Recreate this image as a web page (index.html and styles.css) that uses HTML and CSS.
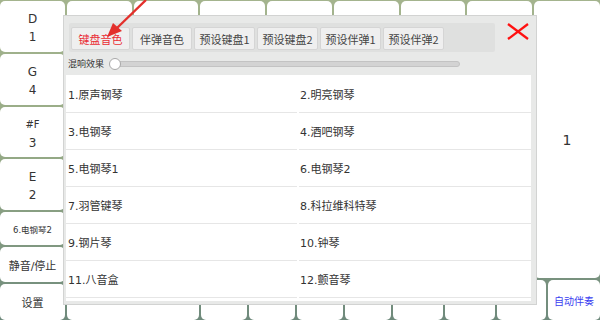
FILE: index.html
```html
<!DOCTYPE html>
<html>
<head>
<meta charset="utf-8">
<link rel="stylesheet" href="styles.css">
</head>
<body>
<div class="board">
  <div class="left-col">
    <div class="key key-note h52"><span>D</span><span>1</span></div>
    <div class="key key-note h51"><span>G</span><span>4</span></div>
    <div class="key key-note h50"><span class="sharp">#F</span><span>3</span></div>
    <div class="key key-note h51"><span>E</span><span>2</span></div>
    <div class="key key-small h33">6.电钢琴2</div>
    <div class="key key-cmd h35">静音/停止</div>
    <div class="key key-cmd h36">设置</div>
  </div>
  <div class="main">
    <div class="upper">
      <div class="center">
        <div class="top-row">
          <div class="key"></div><div class="key"></div><div class="key"></div><div class="key"></div><div class="key"></div><div class="key"></div><div class="key"></div>
        </div>
        <div class="key filler"></div>
      </div>
      <div class="key tall">1</div>
    </div>
    <div class="bottom-row">
      <div class="key w132"></div>
      <div class="key w46"></div>
      <div class="key w46"></div>
      <div class="key w46"></div>
      <div class="key w46"></div>
      <div class="key w50"></div>
      <div class="key w50"></div>
      <div class="key w49"></div>
      <div class="key w52 auto">自动伴奏</div>
    </div>
  </div>

  <div class="dialog">
    <div class="tabs-row">
      <div class="tabs">
        <div class="tab active t59">键盘音色</div>
        <div class="tab t60">伴弹音色</div>
        <div class="tab t61">预设键盘1</div>
        <div class="tab t61">预设键盘2</div>
        <div class="tab t61">预设伴弹1</div>
        <div class="tab t61">预设伴弹2</div>
      </div>
      <svg class="close" width="22" height="17" viewBox="0 0 22 17">
        <line x1="1" y1="1" x2="21" y2="16" stroke="#ff1010" stroke-width="2.2"/>
        <line x1="21" y1="1" x2="1" y2="16" stroke="#ff1010" stroke-width="2.2"/>
      </svg>
    </div>
    <div class="reverb">
      <span class="reverb-label">混响效果</span>
      <div class="slider">
        <div class="track"></div>
        <div class="knob"></div>
      </div>
    </div>
    <div class="list">
      <div class="item">1.原声钢琴</div>
      <div class="item right">2.明亮钢琴</div>
      <div class="item">3.电钢琴</div>
      <div class="item right">4.酒吧钢琴</div>
      <div class="item">5.电钢琴1</div>
      <div class="item right">6.电钢琴2</div>
      <div class="item">7.羽管键琴</div>
      <div class="item right">8.科拉维科特琴</div>
      <div class="item">9.钢片琴</div>
      <div class="item right">10.钟琴</div>
      <div class="item">11.八音盒</div>
      <div class="item right">12.颤音琴</div>
    </div>
  </div>

  <svg class="arrow" width="70" height="50" viewBox="0 0 70 50">
    <line x1="66" y1="0" x2="37" y2="28" stroke="#e3302c" stroke-width="2.4"/>
    <polygon points="27,37 33,23 42,31" fill="#e3302c"/>
  </svg>
</div>
</body>
</html>
```

FILE: styles.css
```css
* { box-sizing: border-box; }
html, body { margin: 0; padding: 0; }
body {
  width: 600px;
  height: 320px;
  overflow: hidden;
  font-family: "DejaVu Sans", "Noto Sans CJK SC", sans-serif;
  color: #333;
}
.board {
  position: relative;
  width: 600px;
  height: 320px;
  display: flex;
  gap: 2px;
  padding-top: 1px;
  background: linear-gradient(180deg, #a4b48e 0%, #97ab86 45%, #6f8a7c 100%);
}
.key {
  background: #fff;
  border-radius: 5px;
}
.left-col {
  width: 65px;
  display: flex;
  flex-direction: column;
  gap: 2px;
}
.h52 { height: 51px; }
.h51 { height: 51px; }
.h50 { height: 50px; }
.h33 { height: 33px; }
.h35 { height: 35px; }
.h36 { height: 36px; }
.key-note {
  display: flex;
  flex-direction: column;
  align-items: center;
  justify-content: center;
  gap: 4px;
  padding-top: 3px;
  font-size: 12px;
  line-height: 14px;
  color: #333;
}
.key-note .sharp { font-size: 10px; }
.key-small {
  display: flex;
  align-items: center;
  justify-content: center;
  font-size: 8.5px;
  color: #333;
}
.key-cmd {
  display: flex;
  align-items: center;
  justify-content: center;
  font-size: 11px;
  color: #333;
}
.main {
  flex: 1;
  display: flex;
  flex-direction: column;
  gap: 2px;
}
.upper {
  height: 277px;
  display: flex;
  gap: 2px;
}
.center {
  flex: 1;
  display: flex;
  flex-direction: column;
  gap: 2px;
}
.top-row {
  height: 60px;
  display: flex;
  gap: 2px;
}
.top-row .key { flex: 1; }
.filler { flex: 1; }
.tall {
  width: 66px;
  display: flex;
  align-items: center;
  justify-content: center;
  font-size: 14px;
  color: #333;
}
.bottom-row {
  flex: 1;
  display: flex;
  gap: 2px;
}
.w132 { width: 132px; }
.w46 { width: 46px; }
.w50 { width: 50px; }
.w49 { width: 49px; }
.w52 { width: 52px; }
.auto {
  display: flex;
  align-items: center;
  justify-content: center;
  font-size: 10px;
  color: #3a3ef0;
}

/* dialog */
.dialog {
  position: absolute;
  left: 63px;
  top: 15px;
  width: 474px;
  height: 290px;
  background: #e8e9e8;
  border: 1px solid #d2d3d2;
  padding: 7px 6px 4px 1px;
  display: flex;
  flex-direction: column;
}
.tabs-row {
  display: flex;
  align-items: flex-start;
}
.tabs {
  margin-left: 4px;
  width: 426px;
  height: 29px;
  background: #dfe0df;
  border-radius: 2px;
  padding: 4px 2px 2px 2px;
  display: flex;
  gap: 2px;
}
.tab {
  height: 23px;
  background: #efefef;
  border: 1px solid #d5d5d5;
  border-radius: 2px;
  display: flex;
  align-items: center;
  justify-content: center;
  font-size: 11px;
  color: #444;
  font-family: "Noto Sans CJK SC", sans-serif;
}
.tab.active { color: #ea2d35; }
.t59 { width: 59px; }
.t60 { width: 60px; }
.t61 { width: 61px; }
.close {
  margin-left: 12px;
  margin-top: 0px;
}
.reverb {
  margin-top: 5px;
  margin-left: 3px;
  height: 14px;
  display: flex;
  align-items: center;
}
.reverb-label {
  font-size: 9px;
  color: #333;
  font-family: "Noto Sans CJK SC", sans-serif;
}
.slider {
  position: relative;
  margin-left: 5px;
  width: 351px;
  height: 12px;
  display: flex;
  align-items: center;
}
.track {
  margin-left: 5px;
  flex: 1;
  height: 6px;
  background: #d3d3d3;
  border: 1px solid #c3c3c3;
  border-radius: 3px;
}
.knob {
  position: absolute;
  left: 0;
  top: 0;
  width: 12px;
  height: 12px;
  border-radius: 50%;
  background: #fff;
  border: 1px solid #a8a8a8;
}
.list {
  margin-top: 5px;
  margin-left: 1px;
  width: 465px;
  background: #fff;
  display: grid;
  grid-template-columns: 231px 232px;
  column-gap: 2px;
  grid-auto-rows: 37px;
  padding-top: 1px;
  padding-bottom: 3px;
}
.item {
  border-bottom: 1px solid #e6e6e6;
  display: flex;
  align-items: center;
  padding-left: 2px;
  font-size: 11px;
  color: #333;
}
.item.right { padding-left: 1px; }

.arrow {
  position: absolute;
  left: 80px;
  top: 0;
}
```
